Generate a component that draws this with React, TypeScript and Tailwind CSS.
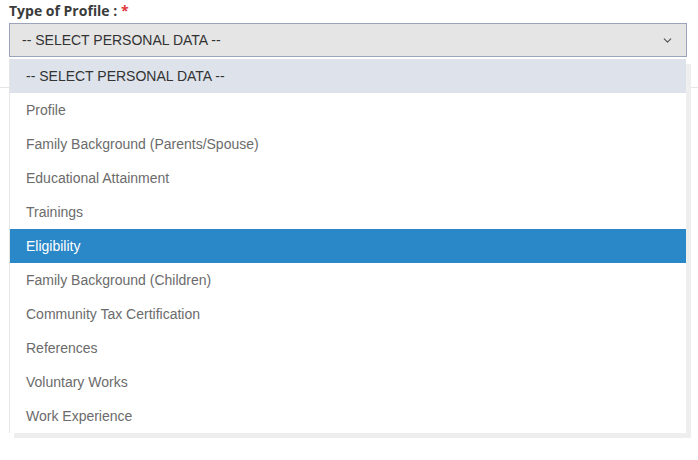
import { ChevronDown } from 'lucide-react';

const options = [
  'Profile',
  'Family Background (Parents/Spouse)',
  'Educational Attainment',
  'Trainings',
  'Eligibility',
  'Family Background (Children)',
  'Community Tax Certification',
  'References',
  'Voluntary Works',
  'Work Experience',
]

export default function App() {
  const selected = 'Eligibility'

  return (
    <div className="relative h-[460px] w-[698px] bg-white" style={{ fontFamily: '"Liberation Sans", Arial, sans-serif' }}>
      <div className="px-[9px] pt-px">
        <label className="block h-[22px] text-[14px] font-bold leading-[20px] text-[#3b3b3b]" style={{ fontFamily: '"Open Sans", sans-serif' }}>
          Type of Profile : <span className="text-[#e0363a]">*</span>
        </label>
        <div className="flex h-[34px] w-[678px] items-center justify-between border border-[#9aa5bb] bg-[#e5e5e5] pl-3 pr-[12px] text-[14px] text-[#333]">
          <span>-- SELECT PERSONAL DATA --</span>
          <ChevronDown size={13} strokeWidth={2.2} className="text-[#555]" />
        </div>
      </div>
      <div className="mt-[30px] border-b border-[#e6e6e6]" />

      <ul className="absolute left-[9px] top-[59px] w-[677px] border-l border-[#e6e6e6] bg-white text-[14px] shadow-[5px_5px_0_0_#eeeeee]">
        <li className="flex h-[34px] items-center bg-[#dee3eb] pl-4 text-[#333]">-- SELECT PERSONAL DATA --</li>
        {options.map((o) => (
          <li
            key={o}
            className={
              o === selected
                ? 'flex h-[34px] items-center bg-[#2a87c8] pl-4 text-white'
                : 'flex h-[34px] items-center pl-4 text-[#6b6b6b]'
            }
          >
            {o}
          </li>
        ))}
      </ul>
    </div>
  )
}
